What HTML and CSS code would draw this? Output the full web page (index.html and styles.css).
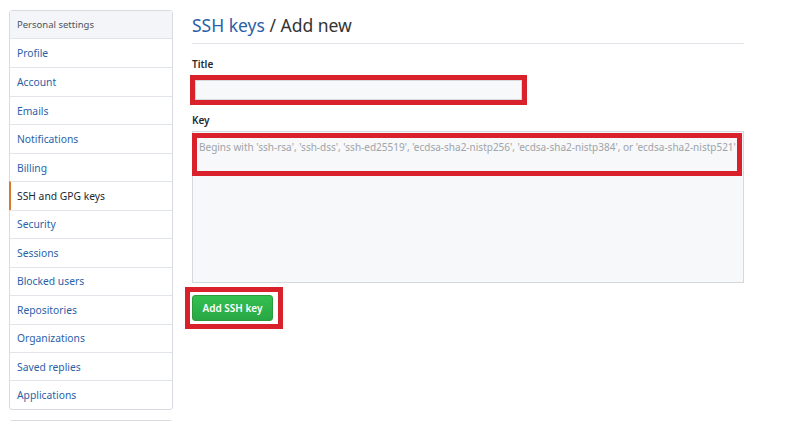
FILE: index.html
```html
<!DOCTYPE html>
<html lang="en">
<head>
    <meta charset="UTF-8">
    <meta name="viewport" content="width=device-width, initial-scale=1.0">
    <title>Add new SSH key</title>
    <link rel="stylesheet" href="styles.css">
</head>
<body>
    <div class="page">
        <!-- Settings menu -->
        <div class="sidebar">
            <nav class="menu">
                <div class="menu-heading">Personal settings</div>
                <a class="menu-item" href="#">Profile</a>
                <a class="menu-item" href="#">Account</a>
                <a class="menu-item" href="#">Emails</a>
                <a class="menu-item" href="#">Notifications</a>
                <a class="menu-item" href="#">Billing</a>
                <a class="menu-item selected" href="#">SSH and GPG keys</a>
                <a class="menu-item" href="#">Security</a>
                <a class="menu-item" href="#">Sessions</a>
                <a class="menu-item" href="#">Blocked users</a>
                <a class="menu-item" href="#">Repositories</a>
                <a class="menu-item" href="#">Organizations</a>
                <a class="menu-item" href="#">Saved replies</a>
                <a class="menu-item" href="#">Applications</a>
            </nav>
            <nav class="menu menu-next"></nav>
        </div>

        <!-- New key form -->
        <div class="main">
            <h2 class="subhead"><a href="#">SSH keys</a> / Add new</h2>

            <form>
                <label class="field-label" for="key-title">Title</label>
                <div class="mark mark-title">
                    <input type="text" id="key-title" class="input-title">
                </div>

                <label class="field-label label-key" for="key-body">Key</label>
                <div class="key-wrap">
                    <textarea id="key-body" class="input-key" placeholder="Begins with 'ssh-rsa', 'ssh-dss', 'ssh-ed25519', 'ecdsa-sha2-nistp256', 'ecdsa-sha2-nistp384', or 'ecdsa-sha2-nistp521'"></textarea>
                    <div class="mark-overlay"></div>
                </div>

                <div class="mark mark-btn">
                    <button type="button" class="btn-primary">Add SSH key</button>
                </div>
            </form>
        </div>
    </div>
</body>
</html>
```

FILE: styles.css
```css
body {
    margin: 0;
    font-family: "Noto Sans", "Open Sans", sans-serif;
    color: #24292e;
    background: #fff;
}

.page {
    display: flex;
    align-items: flex-start;
    height: 421px;
    box-sizing: border-box;
    overflow: hidden;
    padding: 10px 0 0 9px;
    gap: 19px;
}

.sidebar {
    width: 164px;
    flex-shrink: 0;
}

.menu {
    border: 1px solid #d8dce1;
    border-radius: 3px;
    background: #fff;
}

.menu-next {
    margin-top: 10px;
    height: 20px;
}

.menu-heading {
    height: 28px;
    box-sizing: border-box;
    display: flex;
    align-items: center;
    padding-left: 7px;
    font-size: 9.5px;
    color: #4e5358;
    background: #f3f5f8;
    border-bottom: 1px solid #e1e4e8;
}

.menu-item {
    display: flex;
    align-items: center;
    height: 28.46px;
    box-sizing: border-box;
    padding-left: 7px;
    font-size: 10.3px;
    color: #2b5fa8;
    text-decoration: none;
    border-top: 1px solid #e1e4e8;
}

.menu-heading + .menu-item { border-top: none; }

.menu-item.selected {
    color: #24292e;
    border-left: 2px solid #d9792c;
    margin-left: -1px;
    padding-left: 6px;
}

.main {
    width: 552px;
}

.subhead {
    margin: 4px 0 0;
    padding-bottom: 7px;
    font-size: 17.5px;
    font-weight: 400;
    line-height: 22px;
    color: #333;
    border-bottom: 1px solid #e1e4e8;
}

.subhead a {
    color: #2b5fa8;
    text-decoration: none;
}

.field-label {
    display: block;
    font-size: 10px;
    font-weight: 600;
    margin: 13px 0 4px;
}

.label-key {
    margin-top: 8px;
}

.mark {
    display: inline-block;
    border: 5px solid #d9212c;
}

.mark-title {
    margin-left: -2px;
}

.input-title {
    display: block;
    width: 327px;
    height: 20px;
    box-sizing: border-box;
    margin: 0;
    border: 1px solid #d5d8dc;
    background: #f7f8fa;
}

.key-wrap {
    position: relative;
    margin-top: 1px;
}

.input-key {
    display: block;
    width: 552px;
    height: 152px;
    box-sizing: border-box;
    margin: 0;
    padding: 8px 0 8px 6px;
    border: 1px solid #d5d8dc;
    background: #f7f8fa;
    resize: none;
    font-family: "Noto Sans", "Open Sans", sans-serif;
    font-size: 10px;
    overflow: hidden;
    white-space: nowrap;
}

.input-key::placeholder { color: #a0a4a8; }

.mark-overlay {
    position: absolute;
    left: 0;
    top: 2px;
    width: 550px;
    height: 43px;
    box-sizing: border-box;
    border: 5px solid #d9212c;
}

.mark-btn {
    margin: 4px 0 0 -7px;
    padding: 3px 5px 3px 2px;
}

.btn-primary {
    display: block;
    width: 81px;
    height: 26px;
    border: 1px solid #2a9a3c;
    border-radius: 3px;
    background: linear-gradient(#34c050, #28a745);
    color: #fff;
    font-family: inherit;
    font-size: 10px;
    font-weight: 600;
    cursor: pointer;
}
```
